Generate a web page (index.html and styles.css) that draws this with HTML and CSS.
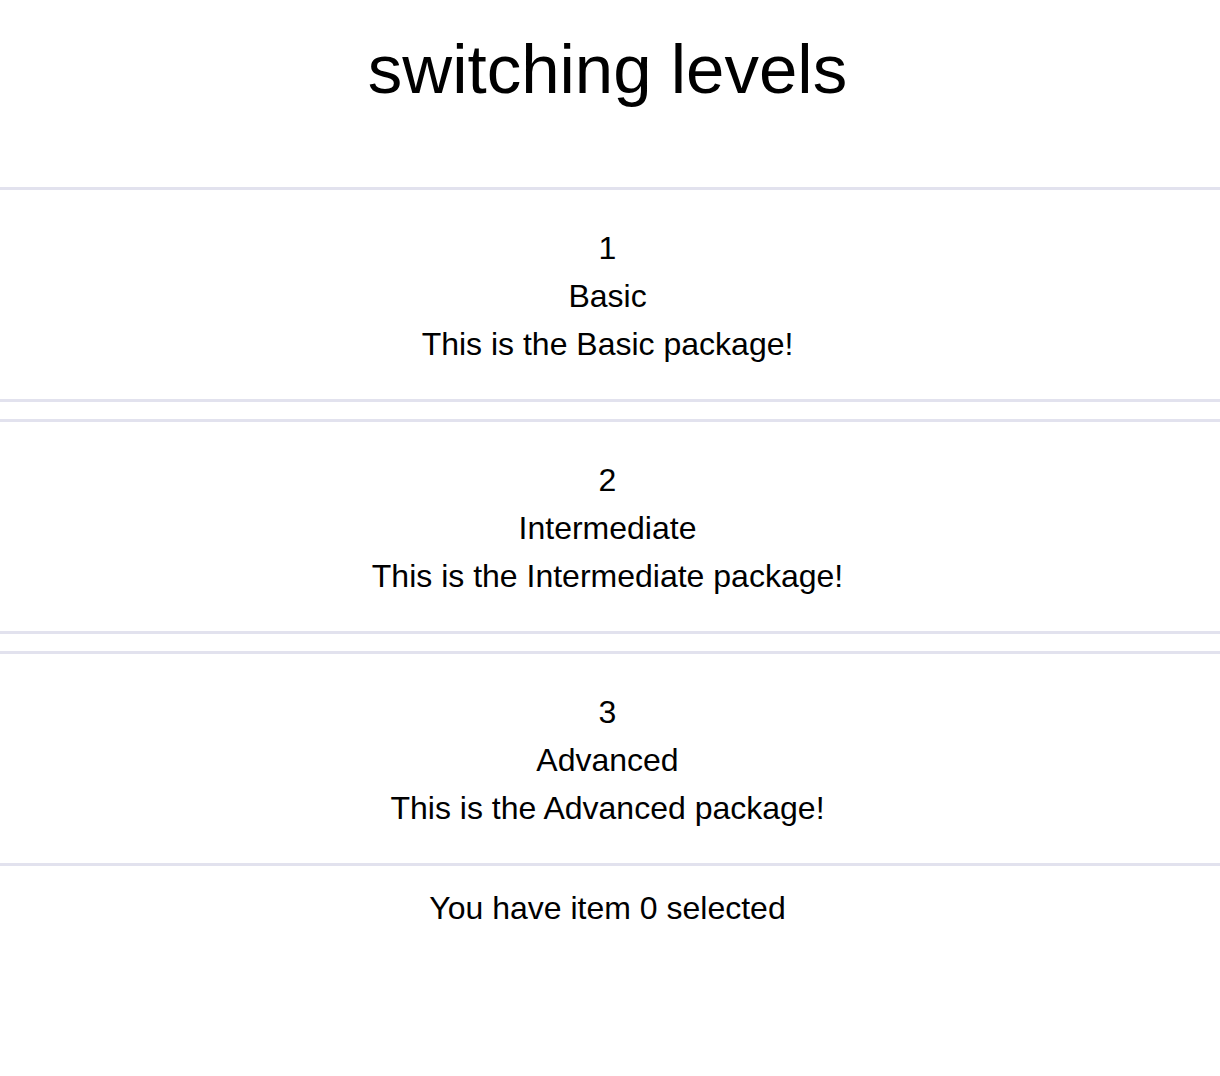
FILE: index.html
```html
<!DOCTYPE html>
<html lang="en">
<head>
<meta charset="utf-8">
<title>switching levels</title>
<link rel="stylesheet" href="styles.css">
</head>
<body>
<main class="app">
  <h1 class="title">switching levels</h1>
  <ul class="levels">
    <li class="level">
      <div class="line">1</div>
      <div class="line">Basic</div>
      <div class="line">This is the Basic package!</div>
    </li>
    <li class="level">
      <div class="line">2</div>
      <div class="line">Intermediate</div>
      <div class="line">This is the Intermediate package!</div>
    </li>
    <li class="level">
      <div class="line">3</div>
      <div class="line">Advanced</div>
      <div class="line">This is the Advanced package!</div>
    </li>
  </ul>
  <p class="status">You have item 0 selected</p>
</main>
</body>
</html>
```

FILE: styles.css
```css
html, body {
  margin: 0;
  padding: 0;
  background: #ffffff;
}
body {
  font-family: "Liberation Sans", Arial, sans-serif;
  color: #000000;
}
.app {
  display: flex;
  flex-direction: column;
  text-align: center;
}
.title {
  margin: 30px 0 0 0;
  padding-right: 5px;
  font-size: 69px;
  font-weight: 400;
  line-height: 80px;
}
.levels {
  list-style: none;
  margin: 77px 0 0 0;
  padding: 0;
  display: flex;
  flex-direction: column;
  gap: 17px;
}
.level {
  border-top: 3px solid #e2e2ee;
  border-bottom: 3px solid #e2e2ee;
  padding: 34px 5px 31px 0;
  font-size: 32px;
  line-height: 48px;
}
.status {
  margin: 18px 0 0 0;
  padding-right: 5px;
  font-size: 32px;
  line-height: 48px;
}
```
